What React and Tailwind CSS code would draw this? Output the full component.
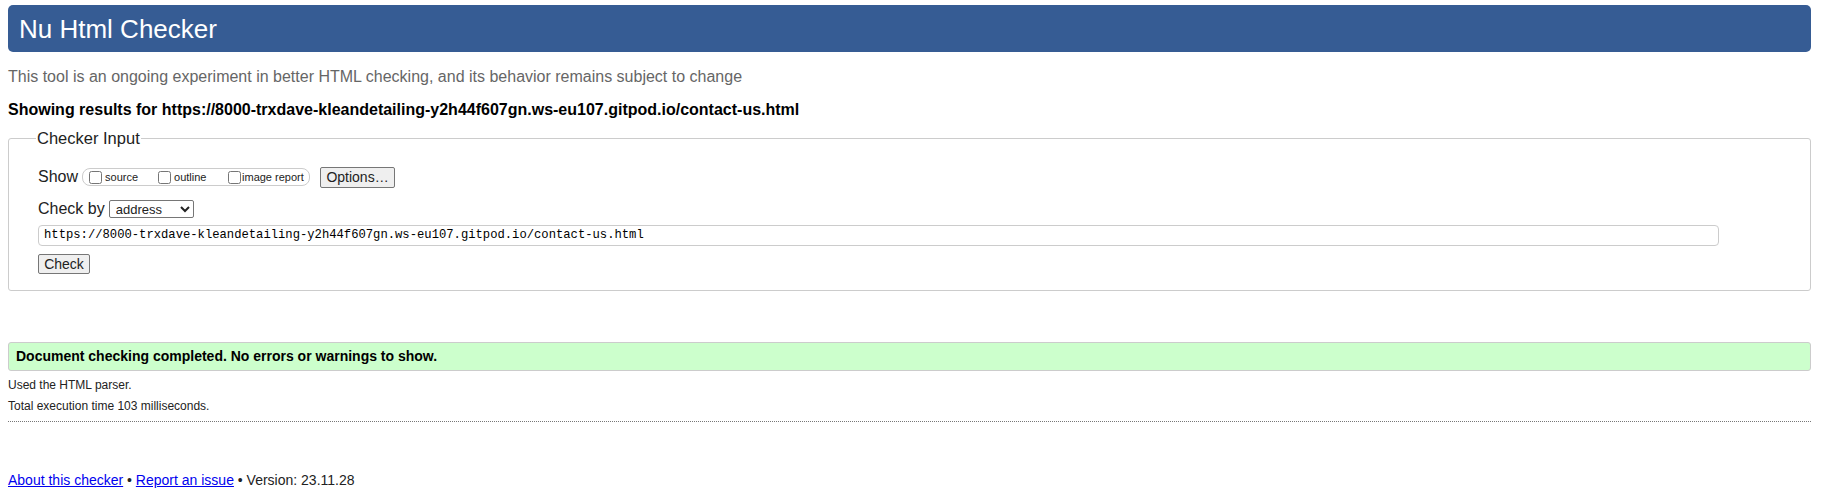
export default function App() {
  const url = 'https://8000-trxdave-kleandetailing-y2h44f607gn.ws-eu107.gitpod.io/contact-us.html';
  return (
    <div className="min-h-[500px] bg-white pl-[8px] pr-[11px] pt-[5px] text-[#222] font-['Liberation_Sans',Arial,sans-serif]">
      <header className="h-[47px] rounded-[5px] bg-[#365c94] px-[11px] flex items-center">
        <h1 className="text-[26px] leading-none text-white">Nu Html Checker</h1>
      </header>

      <p className="mt-[16px] text-[16px] leading-[18px] text-[#666]">
        This tool is an ongoing experiment in better HTML checking, and its behavior remains subject to change
      </p>
      <p className="mt-[15px] text-[16px] leading-[18px] font-bold text-black">Showing results for {url}</p>

      <fieldset className="mt-[10px] border border-[#ccc] rounded-[3px] pl-[29px] pr-[8px] pt-[18px] pb-[14px]">
        <legend className="ml-[-2px] px-[1px] text-[16.5px] leading-[19px] text-[#222]">Checker Input</legend>

        <div className="flex items-center h-[22px]">
          <span className="text-[16px]">Show</span>
          <div className="ml-[4px] flex items-center h-[18px] w-[228px] border border-[#ccc] rounded-[8px] pl-[6px] text-[11px]">
            <label className="flex items-center w-[69px]">
              <input type="checkbox" className="m-0 w-[13px] h-[13px]" />
              <span className="ml-[3px]">source</span>
            </label>
            <label className="flex items-center w-[70px]">
              <input type="checkbox" className="m-0 w-[13px] h-[13px]" />
              <span className="ml-[3px]">outline</span>
            </label>
            <label className="flex items-center">
              <input type="checkbox" className="m-0 w-[13px] h-[13px]" />
              <span className="ml-[1px]">image report</span>
            </label>
          </div>
          <button className="ml-[10px] h-[21px] w-[75px] border border-[#767676] rounded-[2px] bg-[#efefef] text-[14px] leading-none">
            Options…
          </button>
        </div>

        <div className="mt-[11px] flex items-center h-[20px]">
          <span className="text-[16px]">Check by</span>
          <select className="ml-[4px] h-[18px] w-[85px] border border-[#767676] rounded-[2px] bg-white text-[13px] pl-[2px]">
            <option>address</option>
          </select>
        </div>

        <div className="mt-[2px] pr-[83px]">
          <input
            readOnly
            value={url}
            className="w-full h-[21px] border border-[#ccc] rounded-[4px] px-[5px] text-[12.2px] font-['Liberation_Mono',monospace] text-black outline-none"
          />
        </div>

        <button className="mt-[8px] h-[20px] w-[52px] border border-[#767676] rounded-[2px] bg-[#efefef] text-[14px] leading-none">
          Check
        </button>
      </fieldset>

      <div className="mt-[51px] h-[29px] border border-[#ccc] rounded-[3px] bg-[#ccffcc] px-[7px] flex items-center">
        <p className="text-[14px] font-bold text-black">Document checking completed. No errors or warnings to show.</p>
      </div>
      <p className="mt-[7px] text-[12px] leading-[14px]">Used the HTML parser.</p>
      <p className="mt-[7px] text-[12px] leading-[14px]">Total execution time 103 milliseconds.</p>
      <div className="mt-[8px] border-t border-dotted border-[#777]" />

      <p className="mt-[50px] text-[14px] leading-[16px] text-[#222]">
        <a href="#" className="text-[#0000ee] underline">About this checker</a>
        {' • '}
        <a href="#" className="text-[#0000ee] underline">Report an issue</a>
        {' • Version: 23.11.28'}
      </p>
    </div>
  );
}
